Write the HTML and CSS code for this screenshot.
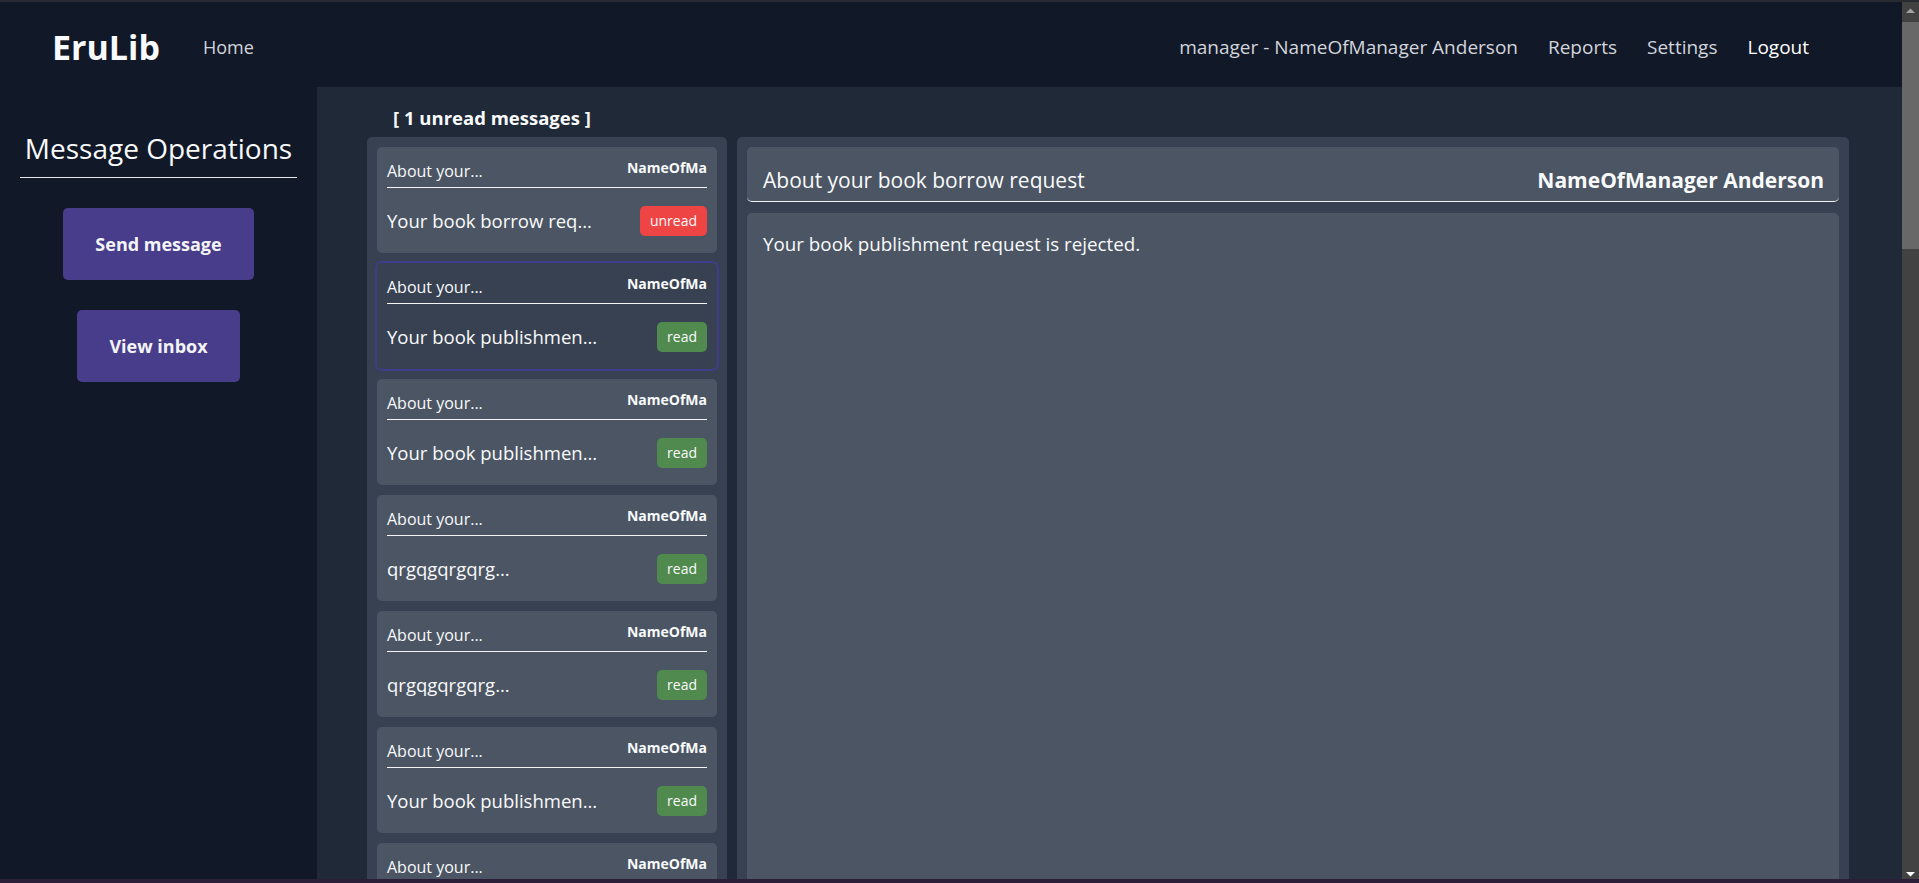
FILE: index.html
```html
<!DOCTYPE html>
<html lang="en">
<head>
<meta charset="utf-8">
<title>EruLib - Messages</title>
<link rel="stylesheet" href="styles.css">
</head>
<body>
<header class="nav">
  <div class="nav-left">
    <a class="brand" href="#">EruLib</a>
    <a class="nav-link home" href="#">Home</a>
  </div>
  <nav class="nav-right">
    <span class="nav-link">manager - NameOfManager Anderson</span>
    <a class="nav-link" href="#">Reports</a>
    <a class="nav-link" href="#">Settings</a>
    <a class="nav-link logout" href="#">Logout</a>
  </nav>
</header>
<div class="layout">
  <aside class="sidebar">
    <h2 class="side-title">Message Operations</h2>
    <div class="side-actions">
      <button class="btn">Send message</button>
      <button class="btn">View inbox</button>
    </div>
  </aside>
  <main class="content">
    <div class="unread">[ 1 unread messages ]</div>
    <div class="panes">
      <section class="list">
        <div class="card"><div class="card-head"><span class="card-title">About your...</span><span class="card-sender">NameOfMa</span></div><div class="card-row"><span class="card-body">Your book borrow req...</span><span class="badge unread-badge">unread</span></div></div>
        <div class="card selected"><div class="card-head"><span class="card-title">About your...</span><span class="card-sender">NameOfMa</span></div><div class="card-row"><span class="card-body">Your book publishmen...</span><span class="badge read-badge">read</span></div></div>
        <div class="card"><div class="card-head"><span class="card-title">About your...</span><span class="card-sender">NameOfMa</span></div><div class="card-row"><span class="card-body">Your book publishmen...</span><span class="badge read-badge">read</span></div></div>
        <div class="card"><div class="card-head"><span class="card-title">About your...</span><span class="card-sender">NameOfMa</span></div><div class="card-row"><span class="card-body">qrgqgqrgqrg...</span><span class="badge read-badge">read</span></div></div>
        <div class="card"><div class="card-head"><span class="card-title">About your...</span><span class="card-sender">NameOfMa</span></div><div class="card-row"><span class="card-body">qrgqgqrgqrg...</span><span class="badge read-badge">read</span></div></div>
        <div class="card"><div class="card-head"><span class="card-title">About your...</span><span class="card-sender">NameOfMa</span></div><div class="card-row"><span class="card-body">Your book publishmen...</span><span class="badge read-badge">read</span></div></div>
        <div class="card"><div class="card-head"><span class="card-title">About your...</span><span class="card-sender">NameOfMa</span></div><div class="card-row"><span class="card-body">Your book borrow req...</span><span class="badge read-badge">read</span></div></div>
      </section>
      <section class="detail">
        <div class="detail-head">
          <span class="detail-title">About your book borrow request</span>
          <span class="detail-sender">NameOfManager Anderson</span>
        </div>
        <div class="detail-body">Your book publishment request is rejected.</div>
      </section>
    </div>
  </main>
</div>
<div class="scrollbar" aria-hidden="true">
  <div class="sb-btn">
    <svg width="17" height="17" viewBox="0 0 17 17"><path d="M4 11h9L8.5 6.5z" fill="#a3a3a3"/></svg>
  </div>
  <div class="sb-track">
    <div class="sb-thumb"></div>
  </div>
  <div class="sb-btn">
    <svg width="17" height="17" viewBox="0 0 17 17"><path d="M4 6h9L8.5 10.5z" fill="#ffffff"/></svg>
  </div>
</div>
<div class="window-edge" aria-hidden="true"></div>
</body>
</html>
```

FILE: styles.css
```css
* { box-sizing: border-box; }

html { background: #111827; }

body {
  margin: 0;
  padding-right: 17px;
  font-family: "Open Sans", "Noto Sans", sans-serif;
  color: #f3f4f6;
  background: #111827;
}

a { text-decoration: none; color: inherit; }

/* ---------- top navigation ---------- */
.nav {
  height: 87px;
  border-top: 2px solid #272a30;
  padding: 5px 93px 0 52px;
  background: #111827;
  display: flex;
  align-items: center;
  justify-content: space-between;
}

.nav-left, .nav-right {
  display: flex;
  align-items: center;
}

.nav-left { gap: 43px; }
.nav-right { gap: 30px; }

.brand {
  font-size: 34px;
  line-height: 46px;
  font-weight: 700;
  color: #f9fafb;
}

.nav-link {
  font-size: 19px;
  line-height: 24px;
  color: #d1d5db;
}

.nav-link.home { font-size: 18px; }
.nav-link.logout { color: #ffffff; }

/* ---------- layout ---------- */
.layout {
  display: grid;
  grid-template-columns: 317px 1fr;
}

.sidebar {
  background: #111827;
  padding-top: 43px;
}

.side-title {
  margin: 0 20px;
  padding-bottom: 11px;
  border-bottom: 1px solid #e5e7eb;
  font-size: 28px;
  line-height: 36px;
  font-weight: 400;
  text-align: center;
  color: #f9fafb;
}

.side-actions {
  display: flex;
  flex-direction: column;
  align-items: center;
  gap: 30px;
  padding-top: 30px;
}

.btn {
  font-family: inherit;
  font-size: 18px;
  line-height: 24px;
  font-weight: 700;
  color: #f3f4f6;
  background: #483d8b;
  border: 0;
  border-radius: 5px;
  padding: 24px 32px;
}

.content {
  background: #1f2937;
  padding: 17px 53px 10px 50px;
}

.unread {
  padding-left: 26px;
  margin-bottom: 5px;
  font-size: 18.5px;
  line-height: 28px;
  font-weight: 700;
  color: #f9fafb;
}

.panes {
  display: flex;
  gap: 10px;
  align-items: stretch;
}

/* ---------- message list ---------- */
.list {
  width: 360px;
  flex: none;
  background: #374151;
  border-radius: 5px;
  padding: 10px;
  display: flex;
  flex-direction: column;
  gap: 10px;
}

.card {
  height: 106px;
  background: #4b5563;
  border-radius: 5px;
  padding: 12px 10px 17px;
}

.card.selected {
  background: #374151;
  outline: 2px solid #3f3c8c;
}

.card-head {
  display: flex;
  justify-content: space-between;
  align-items: flex-start;
  padding-bottom: 4px;
  border-bottom: 1px solid #f3f4f6;
}

.card-title {
  font-size: 16px;
  line-height: 24px;
  color: #f9fafb;
}

.card-sender {
  font-size: 14px;
  line-height: 18px;
  font-weight: 700;
  color: #f9fafb;
}

.card-row {
  margin-top: 18px;
  height: 30px;
  display: flex;
  align-items: center;
  justify-content: space-between;
}

.card-body {
  font-size: 18.5px;
  line-height: 30px;
  color: #f9fafb;
}

.badge {
  height: 30px;
  padding: 0 10px;
  border-radius: 5px;
  font-size: 14px;
  line-height: 30px;
  font-weight: 500;
  color: #f9fafb;
}

.unread-badge { background: #ef4444; }
.read-badge { background: #518a4e; }

/* ---------- message detail ---------- */
.detail {
  flex: 1;
  background: #374151;
  border-radius: 5px;
  padding: 10px;
  display: flex;
  flex-direction: column;
}

.detail-head {
  display: flex;
  justify-content: space-between;
  align-items: center;
  padding: 19px 15px 7px 16px;
  background: #4b5563;
  border-radius: 5px;
  border-bottom: 1px solid #f3f4f6;
}

.detail-title {
  font-size: 21px;
  line-height: 28px;
  color: #f9fafb;
}

.detail-sender {
  font-size: 21px;
  line-height: 28px;
  font-weight: 700;
  color: #f9fafb;
}

.detail-body {
  flex: 1;
  margin-top: 11px;
  background: #4b5563;
  border-radius: 5px;
  padding: 19px 16px;
  font-size: 18.8px;
  line-height: 24px;
  color: #f9fafb;
}

/* ---------- window scrollbar (overlay) ---------- */
.scrollbar {
  position: fixed;
  top: 0;
  right: 0;
  width: 17px;
  height: 100vh;
  border-top: 2px solid #272a30;
  background: #424242;
  display: flex;
  flex-direction: column;
}

.sb-btn {
  height: 17px;
  flex: none;
}

.sb-btn svg { display: block; }

.sb-track {
  flex: 1;
  padding-top: 3px;
}

.sb-thumb {
  height: 227px;
  background: #686868;
}

.window-edge {
  position: fixed;
  left: 0;
  right: 0;
  bottom: 0;
  height: 4px;
  background: #2a1e38;
}
```
